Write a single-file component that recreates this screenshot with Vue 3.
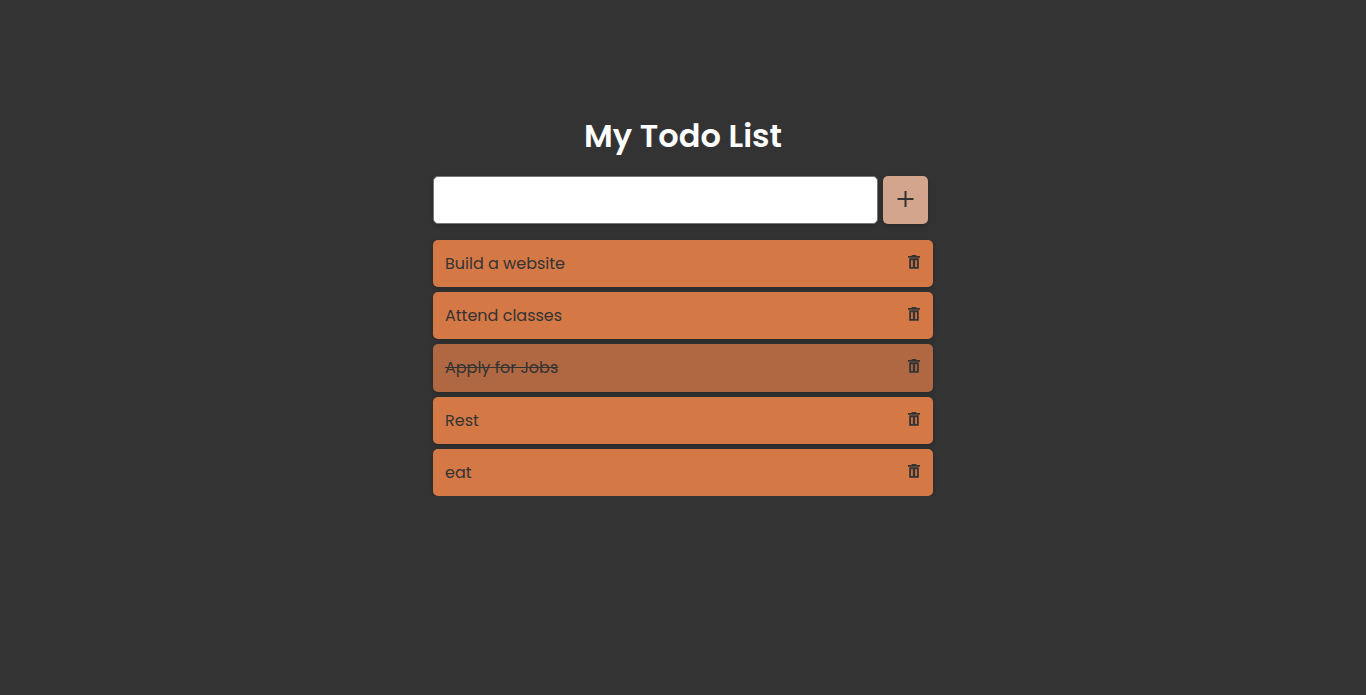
<script setup>
import { ref } from 'vue'

const draft = ref('')
const todos = ref([
  { id: 1, text: 'Build a website', done: false },
  { id: 2, text: 'Attend classes', done: false },
  { id: 3, text: 'Apply for Jobs', done: true },
  { id: 4, text: 'Rest', done: false },
  { id: 5, text: 'eat', done: false }
])
let nextId = 6

function add() {
  const text = draft.value.trim()
  if (!text) return
  todos.value.push({ id: nextId++, text, done: false })
  draft.value = ''
}

function remove(id) {
  todos.value = todos.value.filter((todo) => todo.id !== id)
}
</script>

<template>
  <main class="page">
    <h1 class="title">My Todo List</h1>
    <form class="entry" @submit.prevent="add">
      <input v-model="draft" class="field" type="text" aria-label="New todo" />
      <button class="add" type="submit" aria-label="Add todo">
        <svg class="plus" viewBox="0 0 17 16" aria-hidden="true">
          <path d="M.5 7h16v2H.5zM7.500 0h2v16h-2z" />
        </svg>
      </button>
    </form>
    <ul class="list">
      <li
        v-for="todo in todos"
        :key="todo.id"
        class="item"
        :class="{ done: todo.done }"
        @click="todo.done = !todo.done"
      >
        <span class="text">{{ todo.text }}</span>
        <button class="remove" type="button" aria-label="Delete todo" @click.stop="remove(todo.id)">
          <svg class="bin" viewBox="0 0 12 14" aria-hidden="true">
            <path
              fill-rule="evenodd"
              d="M3.700 0h4.600v1H12v1.700H0V1h3.700zM1.200 3.300h9.600v10.500H1.200zM3.100 5.200v6.800h1.700V5.200zM7.200 5.200v6.800h1.700V5.200z"
            />
          </svg>
        </button>
      </li>
    </ul>
  </main>
</template>

<style>
body {
  background: #333;
}
</style>

<style scoped>
.page {
  box-sizing: border-box;
  width: 100%;
  max-width: 500px;
  margin: 0 auto;
  padding-top: 112px;
  color: #333;
  font-family: Poppins, Inter, "Open Sans", sans-serif;
}

.title {
  margin: 0 0 16px;
  color: #fff;
  font-size: 32px;
  font-weight: 600;
  line-height: 48px;
  text-align: center;
}

.entry {
  display: flex;
  gap: 5px;
  height: 48px;
  margin: 0 5px 16px 0;
}

.field {
  box-sizing: border-box;
  flex: 1;
  min-width: 0;
  padding: 0 12px;
  border: 1px solid #767676;
  border-radius: 5px;
  background: #fff;
  color: #333;
  font: inherit;
  box-shadow: 0 2px 5px rgba(0, 0, 0, 0.2);
}

.add {
  display: flex;
  align-items: center;
  justify-content: center;
  width: 45px;
  padding: 0 0 2px;
  border: 0;
  border-radius: 5px;
  background: #d3a58c;
  cursor: pointer;
  box-shadow: 0 2px 5px rgba(0, 0, 0, 0.2);
}

.plus {
  width: 17px;
  height: 16px;
  fill: #333;
}

.list {
  display: grid;
  gap: 5px;
  min-height: 256px;
  margin: 0;
  padding: 0;
  list-style: none;
}

.item {
  display: flex;
  align-items: center;
  justify-content: space-between;
  padding: 1px 12px 0;
  border-radius: 5px;
  background: #d47846;
  font-size: 16px;
  line-height: 24px;
  cursor: pointer;
  box-shadow: 0 2px 5px rgba(0, 0, 0, 0.2);
}

.done {
  background: #b06842;
}

.done .text {
  text-decoration: line-through;
}

.remove {
  display: flex;
  padding: 0 1px 4px;
  border: 0;
  background: none;
  cursor: pointer;
}

.bin {
  width: 12px;
  height: 14px;
  fill: #333;
}
</style>
